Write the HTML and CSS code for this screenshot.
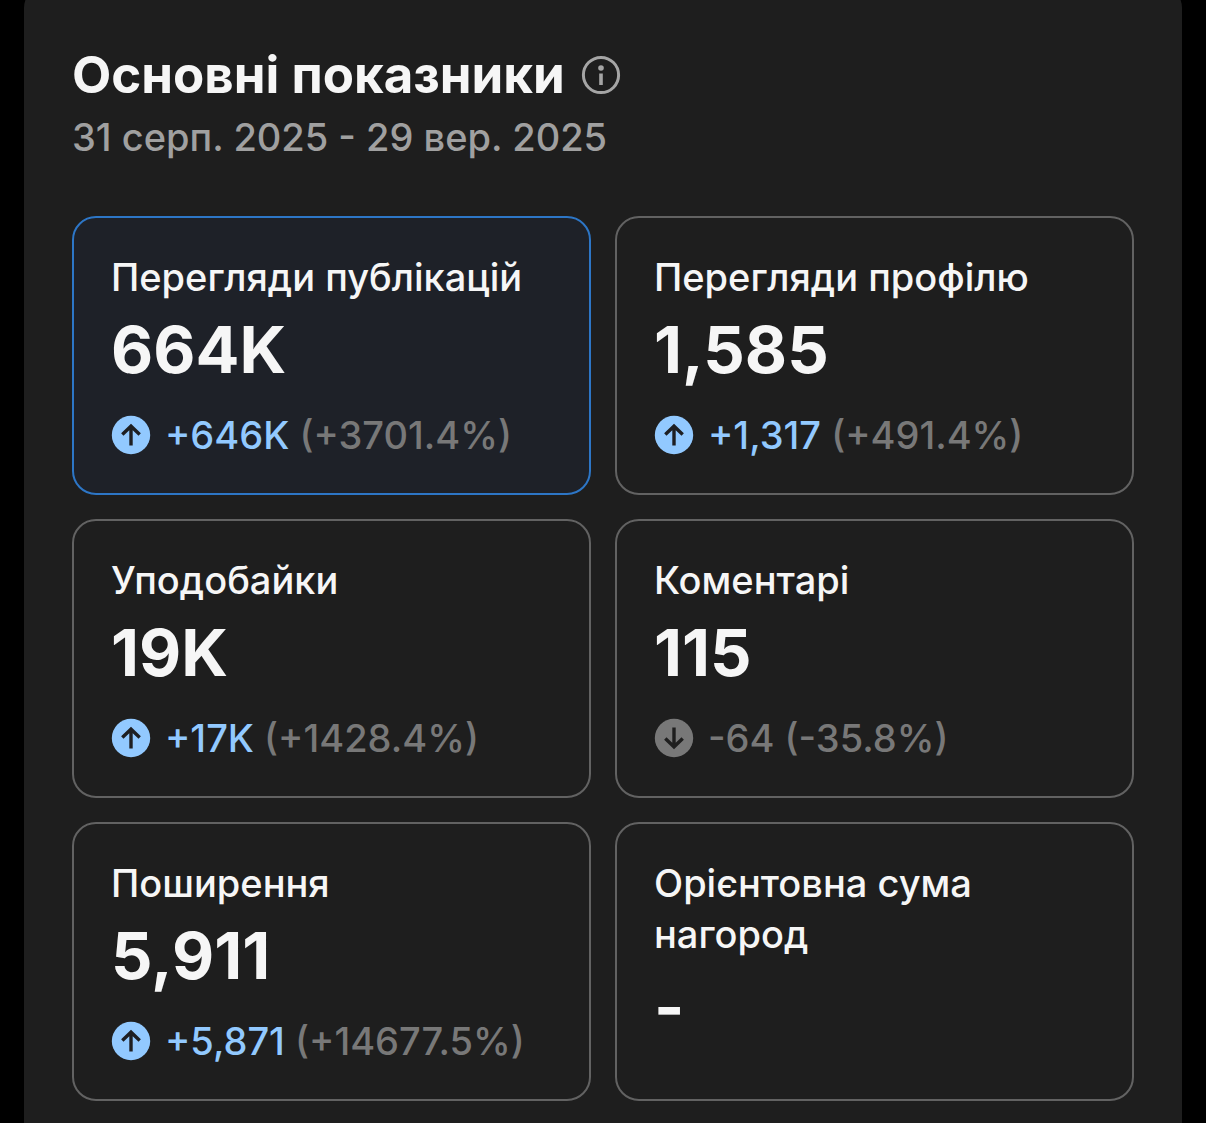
FILE: index.html
```html
<!DOCTYPE html>
<html lang="uk">
<head>
    <meta charset="UTF-8">
    <meta name="viewport" content="width=device-width, initial-scale=1.0">
    <title>Основні показники</title>
    <link rel="stylesheet" href="styles.css">
</head>
<body>

    <!-- Іконки стрілок -->
    <svg class="sprite" aria-hidden="true">
        <symbol id="arrow-up" viewBox="0 0 40 40">
            <circle cx="20" cy="20" r="19.2" fill="currentColor"/>
            <path d="M20 30.5V12M11.3 19.5L20 11.2L28.7 19.5" fill="none" stroke="#1e1f22" stroke-width="3.4"/>
        </symbol>
        <symbol id="arrow-down" viewBox="0 0 40 40">
            <circle cx="20" cy="20" r="19.2" fill="currentColor"/>
            <path d="M20 9.5V28M11.3 20.5L20 28.8L28.7 20.5" fill="none" stroke="#1e1e1e" stroke-width="3.4"/>
        </symbol>
    </svg>

    <main class="panel">
        <header class="panel-header">
            <div class="title-row">
                <h1>Основні показники</h1>
                <button type="button" class="info-btn" aria-label="Довідка">
                    <svg viewBox="0 0 40 40">
                        <circle cx="20" cy="20" r="17.6" fill="none" stroke="currentColor" stroke-width="3"/>
                        <circle cx="20" cy="13" r="2.8" fill="currentColor"/>
                        <path d="M20 18.5V30" stroke="currentColor" stroke-width="3.6"/>
                    </svg>
                </button>
            </div>
            <p class="period">31 серп. 2025 - 29 вер. 2025</p>
        </header>

        <div class="metrics">
            <button type="button" class="card active">
                <span class="label">Перегляди публікацій</span>
                <span class="value">664K</span>
                <span class="trend up">
                    <svg><use href="#arrow-up"/></svg>
                    <span><span class="delta">+646K</span> (+3701.4%)</span>
                </span>
            </button>
            <button type="button" class="card">
                <span class="label">Перегляди профілю</span>
                <span class="value">1,585</span>
                <span class="trend up">
                    <svg><use href="#arrow-up"/></svg>
                    <span><span class="delta">+1,317</span> (+491.4%)</span>
                </span>
            </button>
            <button type="button" class="card">
                <span class="label">Уподобайки</span>
                <span class="value">19K</span>
                <span class="trend up">
                    <svg><use href="#arrow-up"/></svg>
                    <span><span class="delta">+17K</span> (+1428.4%)</span>
                </span>
            </button>
            <button type="button" class="card">
                <span class="label">Коментарі</span>
                <span class="value">115</span>
                <span class="trend">
                    <svg><use href="#arrow-down"/></svg>
                    <span><span class="delta">-64</span> (-35.8%)</span>
                </span>
            </button>
            <button type="button" class="card">
                <span class="label">Поширення</span>
                <span class="value">5,911</span>
                <span class="trend up">
                    <svg><use href="#arrow-up"/></svg>
                    <span><span class="delta">+5,871</span> (+14677.5%)</span>
                </span>
            </button>
            <button type="button" class="card">
                <span class="label">Орієнтовна сума нагород</span>
                <span class="value">-</span>
            </button>
        </div>
    </main>

</body>
</html>
```
FILE: styles.css
```css
* {
    box-sizing: border-box;
}

body {
    margin: 0;
    padding: 0 24px;
    background: #000;
    color: #f6f6f6;
    font-family: Inter, "Noto Sans", sans-serif;
}

.sprite {
    display: none;
}

.panel {
    margin-top: -16px;
    padding: 60px 48px 22px;
    min-height: calc(100vh + 16px);
    background: #1e1e1e;
    border-radius: 24px 24px 0 0;
}

/* Заголовок */
.title-row {
    display: flex;
    align-items: center;
    gap: 16px;
}

h1 {
    margin: 0;
    font-size: 51px;
    line-height: 62px;
    font-weight: 700;
}

.info-btn {
    display: flex;
    padding: 0;
    border: 0;
    background: none;
    color: #a5a5a5;
    cursor: pointer;
}

.info-btn svg {
    width: 40px;
    height: 40px;
}

.period {
    margin: 7px 0 55px;
    color: #a0a0a0;
    font-size: 38px;
    line-height: 48px;
    font-weight: 500;
}

/* Картки */
.metrics {
    display: grid;
    grid-template-columns: 1fr 1fr;
    gap: 24px;
}

.card {
    display: flex;
    flex-direction: column;
    justify-content: flex-start;
    padding: 34px 37px;
    border: 2px solid #626262;
    border-radius: 24px;
    background: none;
    color: inherit;
    font-family: inherit;
    text-align: left;
    cursor: pointer;
}

.card.active {
    border-color: #2d76c6;
    background: #1e2128;
}

.label {
    font-size: 38px;
    line-height: 51px;
    font-weight: 500;
}

.value {
    margin-top: 8px;
    font-size: 65px;
    line-height: 78px;
    font-weight: 700;
}

.trend {
    display: flex;
    align-items: center;
    gap: 14px;
    margin-top: 22px;
    color: #787878;
    font-size: 38px;
    line-height: 48px;
    font-weight: 500;
    white-space: nowrap;
}

.trend svg {
    width: 40px;
    height: 40px;
}

.trend.up svg,
.trend.up .delta {
    color: #92c9ff;
}
```
